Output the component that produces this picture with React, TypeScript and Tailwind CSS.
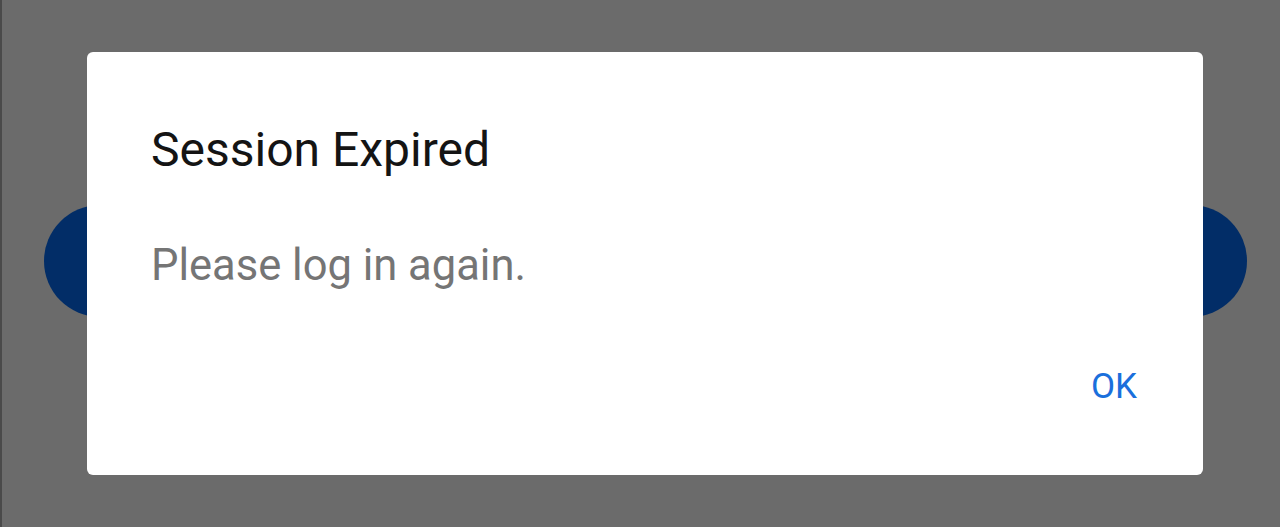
import React from "react";

export default function App() {
  return (
    <div
      className="relative h-[527px] w-[1280px] overflow-hidden bg-[#6b6b6b]"
      style={{ fontFamily: "Roboto, 'Noto Sans', sans-serif" }}
    >
      <div className="absolute left-0 top-0 h-full w-[2px] bg-[#4a4a4a]" />
      {/* underlying page content */}
      <div className="pt-[205px] pl-[44px] pr-[33px]">
        <div className="h-[112px] w-full rounded-full bg-[#022d67]" />
      </div>

      {/* dialog */}
      <div className="absolute left-[87px] top-[52px] w-[1116px] h-[423px] rounded-[6px] bg-white flex flex-col pl-[64px] pr-[66px] pt-[70px]">
        <div className="text-[48px] leading-[56px] text-[#141414]">Session Expired</div>
        <div className="mt-[62px] text-[43.5px] leading-[52px] text-[#757575]">Please log in again.</div>
        <div className="mt-[74px] flex justify-end">
          <span className="text-[35px] leading-[42px] text-[#1a6fdc]">OK</span>
        </div>
      </div>
    </div>
  );
}
